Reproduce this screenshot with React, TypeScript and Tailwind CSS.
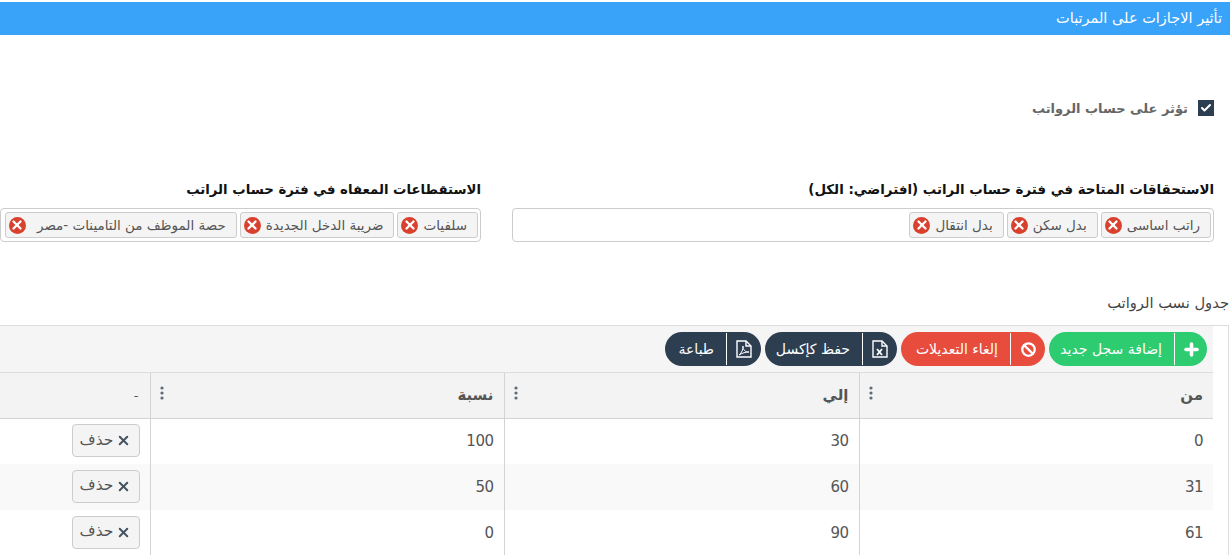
import { FunctionComponent } from 'react';
import { Ban, Check, Plus, X } from 'lucide-react';

const Chip: FunctionComponent<{ label: string; className?: string }> = ({ label, className = '' }) => (
  <span className={`flex h-[26px] items-center justify-between gap-[5px] rounded-[3px] border border-[#cccccc] bg-[#f4f4f4] pr-[10px] pl-[3px] text-[13.5px] text-[#555555] ${className}`}>
    <span>{label}</span>
    <span className="flex h-[17px] w-[17px] items-center justify-center rounded-full bg-[#d9412f]">
      <X size={14} strokeWidth={4} color="#ffffff" />
    </span>
  </span>
);

const ExcelIcon = () => (
  <svg width="16" height="18" viewBox="0 0 16 18" fill="none" stroke="#ffffff" strokeWidth="1.4">
    <path d="M1 1h9l5 5v11H1z" />
    <path d="M10 1v5h5" />
    <path d="M5 9l5 6M10 9l-5 6" strokeWidth="1.8" />
  </svg>
);

const PdfIcon = () => (
  <svg width="16" height="18" viewBox="0 0 16 18" fill="none" stroke="#ffffff" strokeWidth="1.4">
    <path d="M1 1h9l5 5v11H1z" />
    <path d="M10 1v5h5" />
    <path d="M3 15c3-2 4-6 4-9 0 4 2 6 6 6-3 0-7 1-10 3z" strokeWidth="1" />
  </svg>
);

const ToolButton: FunctionComponent<{
  label: string;
  className: string;
  iconClass: string;
  icon: React.ReactNode;
}> = ({ label, className, iconClass, icon }) => (
  <button type="button" className={`flex h-[34px] items-center rounded-[17px] text-[14px] text-white ${className}`}>
    <span className={`flex h-[32px] shrink-0 items-center justify-center border-l border-white ${iconClass}`}>{icon}</span>
    <span className="pr-[12px] whitespace-nowrap">{label}</span>
  </button>
);

const DotsIcon = () => (
  <svg width="4" height="14" viewBox="0 0 4 14" fill="#5f6b76" className="absolute top-[13px] left-[-1px] mx-[10px]">
    <circle cx="2" cy="2" r="1.6" />
    <circle cx="2" cy="7" r="1.6" />
    <circle cx="2" cy="12" r="1.6" />
  </svg>
);

const rows = [
  ['0', '30', '100'],
  ['31', '60', '50'],
  ['61', '90', '0'],
];

const App: FunctionComponent = () => {
  return (
    <div dir="rtl" className="h-[555px] w-[1230px] overflow-hidden bg-white pt-[2px] font-['DejaVu_Sans',sans-serif]">
      <div className="flex h-[33px] items-center bg-[#38a3f9] pr-[8px] text-[14.5px] text-white">
        تأثير الاجازات على المرتبات
      </div>

      <label className="mt-[64px] flex h-[18px] items-center gap-[10px] pr-[16px] text-[13px] font-bold text-[#666666]">
        <span className="flex h-4 w-4 items-center justify-center bg-[#2c3e50]">
          <Check size={12} strokeWidth={4} color="#ffffff" />
        </span>
        <span className="pt-[2px]">تؤثر على حساب الرواتب</span>
      </label>

      <div className="mt-[63px] flex gap-[31px] pr-[16px]">
        <div className="w-[702px] shrink-0">
          <div className="h-[28px] text-[13.4px] font-bold text-[#111111]">
            الاستحقاقات المتاحة في فترة حساب الراتب (افتراضي: الكل)
          </div>
          <div className="flex h-[34px] items-center gap-[3px] rounded-[4px] border border-[#cccccc] px-[2px]">
            <Chip label="راتب اساسى" />
            <Chip label="بدل سكن" />
            <Chip label="بدل انتقال" />
          </div>
        </div>
        <div className="w-[481px] shrink-0">
          <div className="h-[28px] text-[13.3px] font-bold text-[#111111]">
            الاستقطاعات المعفاه في فترة حساب الراتب
          </div>
          <div className="flex h-[34px] items-center gap-[3px] rounded-[4px] border border-[#cccccc] px-[2px]">
            <Chip label="سلفيات" />
            <Chip label="ضريبة الدخل الجديدة" />
            <Chip label="حصة الموظف من التامينات -مصر" className="w-[232px]" />
          </div>
        </div>
      </div>

      <div className="mt-[50px] h-[22px] pr-[1px] text-[14.7px] leading-[22px] text-[#444444]">جدول نسب الرواتب</div>

      <div className="mt-[11px] mr-[1px] w-[1700px] border-t border-r border-[#dddddd] pr-[15px]">
        <div className="flex h-[47px] items-center gap-[4px] border-b border-[#dddddd] bg-[#f5f5f5] pr-[6px]">
          <ToolButton label="إضافة سجل جديد" className="w-[158px] bg-[#2ecc71]" iconClass="w-[33px]" icon={<Plus size={19} strokeWidth={4.5} color="#ffffff" />} />
          <ToolButton label="إلغاء التعديلات" className="w-[144px] bg-[#e74c3c]" iconClass="w-[35px]" icon={<Ban size={15} strokeWidth={3.6} color="#ffffff" />} />
          <ToolButton label="حفظ كإكسل" className="w-[132px] bg-[#2c3e50]" iconClass="w-[35px]" icon={<ExcelIcon />} />
          <ToolButton label="طباعة" className="w-[96px] bg-[#2c3e50]" iconClass="w-[35px]" icon={<PdfIcon />} />
        </div>
        <table className="w-[1417px] table-fixed border-collapse text-[#555555]">
          <thead>
            <tr className="h-[45px] border-b border-[#d3d3d3] bg-[#f3f3f3]">
              <th className="relative w-[354px] border-l border-[#d3d3d3] pr-[10px] text-right text-[15px] font-bold">
                من
                <DotsIcon />
              </th>
              <th className="relative w-[355px] border-l border-[#d3d3d3] pr-[10px] text-right text-[15px] font-bold">
                إلي
                <DotsIcon />
              </th>
              <th className="relative w-[354px] border-l border-[#d3d3d3] pr-[10px] text-right text-[15px] font-bold">
                نسبة
                <DotsIcon />
              </th>
              <th className="w-[354px] pr-[11px] text-right text-[13px] font-normal">-</th>
            </tr>
          </thead>
          <tbody>
            {rows.map((row, i) => (
              <tr key={row[0]} className={`h-[46px] ${i === 1 ? 'bg-[#f9f9f9]' : 'bg-white'}`}>
                {row.map((cell) => (
                  <td key={cell} className="border-l border-[#d3d3d3] pr-[10px] text-[15px] tracking-[-0.5px]">
                    {cell}
                  </td>
                ))}
                <td className="pr-[10px]">
                  <button type="button" className="mb-[2px] flex h-[33px] w-[68px] items-center justify-center gap-[3px] rounded-[4px] border border-[#cccccc] bg-[#f4f4f4] text-[15.5px]">
                    <X size={15} strokeWidth={3.2} color="#44525f" />
                    حذف
                  </button>
                </td>
              </tr>
            ))}
          </tbody>
        </table>
      </div>
    </div>
  );
};

export default App;
